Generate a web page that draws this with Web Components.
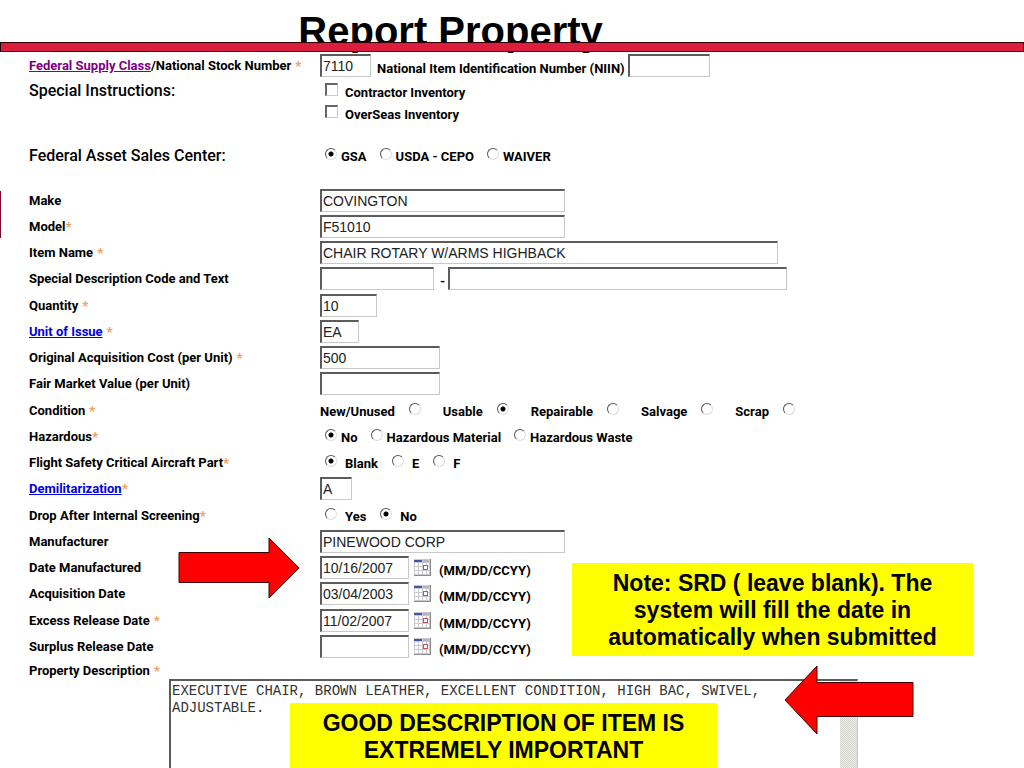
<!DOCTYPE html>
<html lang="en">
<head>
<meta charset="utf-8">
<title>Report Property</title>
<style>
  body { margin: 0; background: #fff; color: #000; font-family: Roboto, "Liberation Sans", sans-serif; }
</style>
</head>
<body>
<report-page>
  <page-banner slot="banner">Report Property</page-banner>

  <field-group class="top">
    <text-field label="/National Stock Number" link="Federal Supply Class" visited required spaced value="7110" size="51" label2="National Item Identification Number (NIIN)" size2="82"></text-field>
    <check-field label="Special Instructions:" options="Contractor Inventory|OverSeas Inventory"></check-field>
  </field-group>
  <field-group class="center">
    <radio-field large label="Federal Asset Sales Center:" options="GSA|USDA - CEPO|WAIVER" selected="0"></radio-field>
  </field-group>
  <field-group>
    <text-field label="Make" value="COVINGTON" size="245"></text-field>
    <text-field label="Model" required value="F51010" size="245"></text-field>
    <text-field label="Item Name" required spaced value="CHAIR ROTARY W/ARMS HIGHBACK" size="458"></text-field>
    <text-field label="Special Description Code and Text" size="114" label2="-" size2="339"></text-field>
  </field-group>
  <field-group>
    <text-field label="Quantity" required spaced value="10" size="57"></text-field>
    <text-field link="Unit of Issue" required spaced value="EA" size="39"></text-field>
    <text-field label="Original Acquisition Cost (per Unit)" required spaced value="500" size="120"></text-field>
    <text-field label="Fair Market Value (per Unit)" size="120"></text-field>
  </field-group>
  <field-group>
    <radio-field trailing label="Condition" required spaced options="New/Unused|Usable|Repairable|Salvage|Scrap" selected="1"></radio-field>
    <radio-field label="Hazardous" required options="No|Hazardous Material|Hazardous Waste" selected="0"></radio-field>
    <radio-field wide label="Flight Safety Critical Aircraft Part" required options="Blank|E|F" selected="0"></radio-field>
    <text-field link="Demilitarization" required value="A" size="32"></text-field>
  </field-group>
  <field-group>
    <radio-field wide label="Drop After Internal Screening" required options="Yes|No" selected="1"></radio-field>
    <text-field label="Manufacturer" value="PINEWOOD CORP" size="245"></text-field>
    <text-field date label="Date Manufactured" value="10/16/2007" size="89"></text-field>
    <text-field date label="Acquisition Date" value="03/04/2003" size="89"></text-field>
  </field-group>
  <field-group>
    <text-field date label="Excess Release Date" required spaced value="11/02/2007" size="89"></text-field>
    <text-field date label="Surplus Release Date" size="89"></text-field>
  </field-group>
  <description-field label="Property Description">EXECUTIVE CHAIR, BROWN LEATHER, EXCELLENT CONDITION, HIGH BAC, SWIVEL, ADJUSTABLE.</description-field>

  <callout-arrow slot="notes" class="date" direction="right"></callout-arrow>
  <callout-arrow slot="notes" class="desc" direction="left"></callout-arrow>
  <callout-note slot="notes" class="srd">Note: SRD ( leave blank). The system will fill the date in automatically when submitted</callout-note>
  <callout-note slot="notes" class="good">GOOD DESCRIPTION OF ITEM IS EXTREMELY IMPORTANT</callout-note>
</report-page>

<script>
const rowStyles = `
  :host { display: block; }
  .row { display: grid; grid-template-columns: 291px 1fr; align-items: center; min-height: 23px; font: bold 13px/16px Roboto, "Liberation Sans", sans-serif; }
  .name { white-space: nowrap; }
  .large { font-weight: 500; font-size: 16px; }
  .controls { display: flex; align-items: center; white-space: nowrap; }
  a { color: #0000e0; }
  a.visited { color: #800080; }
  .req { color: #f0a060; font-weight: 900; }
  .req.spaced { margin-left: 4px; }
  input[type=text] { box-sizing: border-box; height: 23px; margin: 0; padding: 0 0 0 1px; border: 2px solid #5c5c5c; border-right: 1px solid #c8c8c8; border-bottom: 1px solid #c8c8c8; border-radius: 0; background: #fff; color: #222; font: 14px/18px "Liberation Sans", sans-serif; outline: none; }
  input[type=radio], input[type=checkbox] { appearance: none; box-sizing: border-box; flex: none; width: 12px; height: 12px; margin: 0 0 3px; background: #fff; border: 1px solid; border-color: #555 #ccc #ccc #555; }
  input[type=checkbox] { width: 13px; height: 13px; border-width: 2px 1px 1px 2px; border-color: #666 #ccc #ccc #666; }
  input[type=radio] { border-radius: 50%; border-color: #555 #ddd #ddd #555; }
  input[type=radio]:checked { background: radial-gradient(circle, #000 0 2px, #fff 3px); }
`;

class FieldBase extends HTMLElement {
  get labelMarkup() {
    const link = this.getAttribute('link');
    const anchor = link ? `<a href="#help" class="${this.hasAttribute('visited') ? 'visited' : ''}">${link}</a>` : '';
    const req = this.hasAttribute('required') ? `<span class="req ${this.hasAttribute('spaced') ? 'spaced' : ''}">*</span>` : '';
    return anchor + (this.getAttribute('label') || '') + req;
  }
  draw(html) {
    this.attachShadow({ mode: 'open' }).innerHTML = `<style>${rowStyles}</style>${html}`;
  }
}

customElements.define('text-field', class extends FieldBase {
  connectedCallback() {
    const second = this.getAttribute('label2');
    const date = this.hasAttribute('date');
    this.draw(`
      <style>
        .name { padding-top: 1px; }
        .second { padding: 6px 3px 0 6px; }
        button { display: block; width: 17px; height: 17px; margin: 0 8px 0 5px; padding: 0; border: 0; background: none; }
        svg { display: block; }
        .format { padding-top: 6px; font-weight: bold; }
      </style>
      <div class="row">
        <label class="name" for="field">${this.labelMarkup}</label>
        <div class="controls">
          <input type="text" id="field" value="${this.getAttribute('value') || ''}" style="width:${this.getAttribute('size')}px">
          ${second ? `<label class="second" for="other">${second}</label><input type="text" id="other" style="width:${this.getAttribute('size2')}px">` : ''}
          ${date ? `<button type="button" aria-label="Pick a date"><svg width="17" height="17" viewBox="0 0 17 17">
            <rect width="17" height="17" fill="#8c8c8c"/><rect width="16" height="16" fill="#c9c9cf"/>
            <path d="M1 4h3v3H1zM5 4h3v3H5zM9 4h3v3H9zM13 4h2v3h-2zM1 8h3v3H1zM5 8h3v3H5zM13 8h2v3h-2zM1 12h3v3H1zM5 12h3v3H5zM9 12h3v3H9zM13 12h2v3h-2z" fill="#fff"/>
            <path d="M0 1h8v2H0z" fill="#3f57a8"/><path d="M9 1h6v2H9z" fill="#b5b5c4"/>
            <path d="M9 6h5v5H9z" fill="#c8505a"/><path d="M10 7h3v3h-3z" fill="#fff"/>
          </svg></button><span class="format">(MM/DD/CCYY)</span>` : ''}
        </div>
      </div>`);
  }
});

customElements.define('radio-field', class extends FieldBase {
  connectedCallback() {
    const chosen = Number(this.getAttribute('selected'));
    const items = this.getAttribute('options').split('|').map((text, i) => `
      <span class="option"><input type="radio" name="choice" id="o${i}" ${i === chosen ? 'checked' : ''}><label for="o${i}">${text}</label></span>`).join('');
    this.draw(`
      <style>
        .controls { padding-left: 5px; gap: 13px; }
        .option { display: flex; align-items: center; gap: 4px; }
        .option label { padding-top: 2px; }
        :host([wide]) .option { gap: 8px; }
        :host([wide]) .controls { gap: 14px; }
        :host([trailing]) .controls { padding-left: 0; gap: 22px; }
        :host([trailing]) .option { flex-direction: row-reverse; gap: 14px; }
      </style>
      <div class="row" role="radiogroup" aria-labelledby="name">
        <span id="name" class="name ${this.hasAttribute('large') ? 'large' : ''}">${this.labelMarkup}</span>
        <div class="controls">${items}</div>
      </div>`);
  }
});

customElements.define('check-field', class extends FieldBase {
  connectedCallback() {
    const items = this.getAttribute('options').split('|').map((text, i) => `
      <span class="option"><input type="checkbox" id="c${i}"><label for="c${i}">${text}</label></span>`).join('');
    this.draw(`
      <style>
        .row { align-items: start; }
        .name { line-height: 22px; }
        .controls { flex-direction: column; align-items: flex-start; padding-left: 5px; }
        .option { display: flex; align-items: center; height: 22px; gap: 7px; }
        .option label { padding-top: 3px; }
      </style>
      <div class="row" role="group" aria-labelledby="name">
        <span id="name" class="name large">${this.labelMarkup}</span>
        <div class="controls">${items}</div>
      </div>`);
  }
});

customElements.define('description-field', class extends FieldBase {
  connectedCallback() {
    const text = this.textContent.trim();
    this.draw(`
      <style>
        :host { display: flex; flex-direction: column; flex: 1; }
        .title { font: bold 13px/17px Roboto, sans-serif; }
        .box { box-sizing: border-box; display: flex; flex: 1; width: 689px; min-height: 89px; margin-left: 140px; border: 2px solid #5c5c5c; border-right: 1px solid #c8c8c8; border-bottom: 0; }
        textarea { flex: 1; margin: 0; padding: 2px 0 0 1px; border: 0; resize: none; outline: none; overflow: hidden; background: #fff; color: #333; font: 14px/17px "Liberation Mono", monospace; }
        .track { width: 17px; background: repeating-conic-gradient(#d4d4d0 0 25%, #ececea 0 50%) 0 0 / 2px 2px; }
      </style>
      <label class="title" for="text">${this.getAttribute('label')}<span class="req spaced">*</span></label>
      <div class="box"><textarea id="text">${text}</textarea><div class="track"></div></div>`);
  }
});

customElements.define('field-group', class extends HTMLElement {
  connectedCallback() {
    this.attachShadow({ mode: 'open' }).innerHTML = `
      <style>
        :host { display: flex; flex-direction: column; gap: 3px; }
        :host(.top) { padding-bottom: 16px; }
        :host(.center) { padding-bottom: 18px; }
      </style><slot></slot>`;
  }
});

customElements.define('page-banner', class extends HTMLElement {
  connectedCallback() {
    this.attachShadow({ mode: 'open' }).innerHTML = `
      <style>
        :host { display: block; }
        h1 { margin: 0; padding: 11px 12% 0 0; font: bold 40px/40px "Liberation Sans", sans-serif; text-align: center; }
        .rule { position: relative; box-sizing: border-box; height: 10px; margin-top: -9px; background: #d91e3e; border: 1px solid #000; border-top-color: #300; border-bottom: 1px solid #5a1020; }
        .rule::after { content: ""; position: absolute; left: 51px; top: 8px; width: 96px; height: 1px; background: #000; }
      </style>
      <h1><slot></slot></h1><div class="rule"></div>`;
  }
});

customElements.define('callout-note', class extends HTMLElement {
  connectedCallback() {
    this.attachShadow({ mode: 'open' }).innerHTML = `
      <style>
        :host { display: block; box-sizing: border-box; background: #ff0; text-align: center; font: bold 23px/27px "Liberation Sans", sans-serif; }
      </style><slot></slot>`;
  }
});

customElements.define('callout-arrow', class extends HTMLElement {
  connectedCallback() {
    const right = this.getAttribute('direction') === 'right';
    const shape = right
      ? '<svg width="121" height="62"><path d="M1 15.500H91V1L121 31 91 61V45.500H1z"/></svg>'
      : '<svg width="129" height="70"><path d="M128 17.500H32V1L0 35 32 69V51.500H128z"/></svg>';
    this.attachShadow({ mode: 'open' }).innerHTML = `
      <style>:host { display: block; } svg { display: block; overflow: visible; } path { fill: #f00; stroke: #400; stroke-width: 1; }</style>${shape}`;
  }
});

customElements.define('report-page', class extends HTMLElement {
  connectedCallback() {
    this.attachShadow({ mode: 'open' }).innerHTML = `
      <style>
        :host { position: relative; display: flex; flex-direction: column; min-height: 100vh; }
        form { display: flex; flex-direction: column; flex: 1; gap: 4px; padding: 2px 0 0 29px; }
        .edge { position: absolute; left: 0; top: 191px; width: 1px; height: 47px; background: #7a0c32; }
        ::slotted([slot=notes]) { position: absolute; }
        ::slotted(.date) { left: 178px; top: 537px; }
        ::slotted(.desc) { left: 785px; top: 665px; }
        ::slotted(.srd) { left: 572px; top: 563px; width: 401px; padding: 7px 30px 5px; }
        ::slotted(.good) { left: 290px; top: 703px; width: 427px; padding: 7px 30px 4px; }
      </style>
      <slot name="banner"></slot>
      <form><slot></slot></form>
      <div class="edge"></div>
      <slot name="notes"></slot>`;
  }
});
</script>
</body>
</html>
